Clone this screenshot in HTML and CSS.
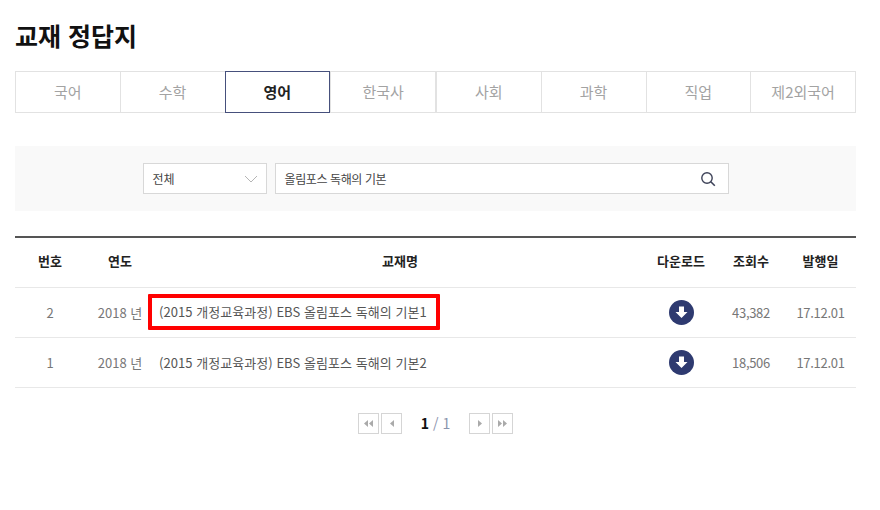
FILE: index.html

```html
<!DOCTYPE html>
<html lang="ko">
<head>
    <meta charset="UTF-8">
    <title>교재 정답지</title>
    <link rel="stylesheet" href="styles.css">
</head>
<body>
    <div class="answer-page">
        <h2 class="page-title">교재 정답지</h2>

        <ul class="subject-tabs">
            <li>국어</li>
            <li>수학</li>
            <li class="active">영어</li>
            <li class="tab-end">한국사</li>
            <li>사회</li>
            <li>과학</li>
            <li>직업</li>
            <li>제2외국어</li>
        </ul>

        <div class="search-box">
            <div class="search-select">
                <span>전체</span>
                <svg width="14" height="8" viewBox="0 0 14 8"><path d="M1 1l6 6 6-6" fill="none" stroke="#b5b5b5" stroke-width="1"/></svg>
            </div>
            <div class="search-input">
                <span>올림포스 독해의 기본</span>
                <svg width="16" height="16" viewBox="0 0 16 16"><circle cx="7" cy="7" r="5.2" fill="none" stroke="#3d4258" stroke-width="1.4"/><path d="M10.8 10.8l4 4" stroke="#3d4258" stroke-width="1.6"/></svg>
            </div>
        </div>

        <table class="book-table">
            <thead>
                <tr>
                    <th class="col-no">번호</th>
                    <th class="col-year">연도</th>
                    <th>교재명</th>
                    <th class="col-down">다운로드</th>
                    <th class="col-view">조회수</th>
                    <th class="col-date">발행일</th>
                </tr>
            </thead>
            <tbody>
                <tr>
                    <td>2</td>
                    <td>2018 년</td>
                    <td class="book-name"><span class="highlight">(2015 개정교육과정) EBS 올림포스 독해의 기본1</span></td>
                    <td>
                        <svg class="down-icon" width="25" height="25" viewBox="0 0 25 25"><circle cx="12.5" cy="12.5" r="12.5" fill="#2e3a70"/><path d="M10 6.5h5v5.5h3.5l-6 6-6-6H10z" fill="#fff"/></svg>
                    </td>
                    <td class="num">43,382</td>
                    <td class="num">17.12.01</td>
                </tr>
                <tr>
                    <td>1</td>
                    <td>2018 년</td>
                    <td class="book-name"><span class="plain">(2015 개정교육과정) EBS 올림포스 독해의 기본2</span></td>
                    <td>
                        <svg class="down-icon" width="25" height="25" viewBox="0 0 25 25"><circle cx="12.5" cy="12.5" r="12.5" fill="#2e3a70"/><path d="M10 6.5h5v5.5h3.5l-6 6-6-6H10z" fill="#fff"/></svg>
                    </td>
                    <td class="num">18,506</td>
                    <td class="num">17.12.01</td>
                </tr>
            </tbody>
        </table>

        <div class="pager">
            <span class="page-btn"><svg width="9" height="7" viewBox="0 0 9 7"><path d="M4 0v7L0 3.5zM9 0v7L5 3.5z" fill="#aaa"/></svg></span>
            <span class="page-btn"><svg width="4" height="7" viewBox="0 0 4 7"><path d="M4 0v7L0 3.5z" fill="#aaa"/></svg></span>
            <span class="page-num"><b>1</b> / 1</span>
            <span class="page-btn"><svg width="4" height="7" viewBox="0 0 4 7"><path d="M0 0v7l4-3.5z" fill="#aaa"/></svg></span>
            <span class="page-btn"><svg width="9" height="7" viewBox="0 0 9 7"><path d="M0 0v7l4-3.5zM5 0v7l4-3.5z" fill="#aaa"/></svg></span>
        </div>
    </div>
</body>
</html>
```

FILE: styles.css

```css
body {
    margin: 0;
    background: #fff;
    font-family: "Noto Sans CJK KR", "Noto Sans", sans-serif;
    color: #333;
}

.answer-page {
    width: 841px;
    padding: 0 0 0 15px;
}

.page-title {
    margin: 0;
    padding-top: 18px;
    height: 71px;
    box-sizing: border-box;
    font-size: 25px;
    line-height: 35px;
    font-weight: 700;
    color: #111;
}

.subject-tabs {
    display: flex;
    margin: 0;
    padding: 0;
    list-style: none;
    height: 42px;
    border: 1px solid #e2e2e2;
    box-sizing: border-box;
}

.subject-tabs li {
    flex: 1;
    display: flex;
    justify-content: center;
    align-items: center;
    padding-bottom: 2px;
    font-size: 15px;
    color: #a3a3a3;
    border-left: 1px solid #e2e2e2;
    margin-top: -1px;
    margin-bottom: -1px;
}

.subject-tabs li:first-child {
    border-left: none;
}

.subject-tabs li.tab-end {
    border-right: 1px solid #e2e2e2;
}

.subject-tabs li.active {
    border: 1px solid #46507c;
    color: #222;
    font-weight: 700;
}

.search-box {
    display: flex;
    justify-content: center;
    gap: 8px;
    margin-top: 33px;
    padding: 17px 0;
    height: 65px;
    box-sizing: border-box;
    background: #f9f9f9;
}

.search-select,
.search-input {
    display: flex;
    justify-content: space-between;
    align-items: center;
    height: 31px;
    box-sizing: border-box;
    background: #fff;
    border: 1px solid #d8d8d8;
    font-size: 12px;
    color: #444;
}

.search-select {
    width: 124px;
    padding: 0 8px 0 9px;
}

.search-input {
    width: 454px;
    padding: 0 12px 0 9px;
    letter-spacing: -0.4px;
}

.book-table {
    width: 100%;
    margin-top: 25px;
    border-collapse: collapse;
    table-layout: fixed;
    border-top: 2px solid #555;
}

.book-table th {
    height: 50px;
    padding: 0 0 3px;
    box-sizing: border-box;
    font-size: 13px;
    font-weight: 700;
    color: #222;
    border-bottom: 1px solid #e8e8e8;
}

.book-table td {
    height: 50px;
    padding: 0;
    box-sizing: border-box;
    text-align: center;
    font-size: 13px;
    color: #777;
    border-bottom: 1px solid #e8e8e8;
}

.col-no { width: 70px; }
.col-year { width: 70px; }
.col-down { width: 72px; }
.col-view { width: 68px; }
.col-date { width: 71px; }

.book-table td.num {
    letter-spacing: -0.3px;
}

.book-table td.book-name {
    text-align: left;
    color: #555;
    letter-spacing: 0.05px;
}

.plain {
    padding-left: 4px;
}

.highlight {
    display: inline-block;
    padding: 0 9px 0 7px;
    height: 36px;
    line-height: 28px;
    box-sizing: border-box;
    border: 4px solid #f00;
    border-radius: 1px;
    margin-left: -7px;
    vertical-align: middle;
}

.down-icon {
    display: block;
    margin: 0 auto;
}

.pager {
    display: flex;
    justify-content: center;
    align-items: center;
    gap: 2px;
    margin-top: 25px;
}

.page-btn {
    display: flex;
    justify-content: center;
    align-items: center;
    width: 21px;
    height: 21px;
    box-sizing: border-box;
    border: 1px solid #d5d5d5;
}

.page-num {
    width: 63px;
    text-align: center;
    font-size: 14px;
    color: #8a94ad;
}

.page-num b {
    color: #111;
}
```
